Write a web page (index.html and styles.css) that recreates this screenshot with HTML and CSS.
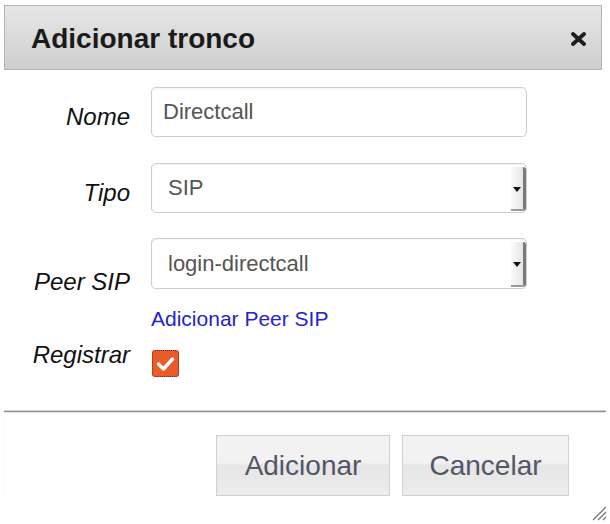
FILE: index.html
```html
<!DOCTYPE html>
<html>
<head>
	<title>Adicionar tronco</title>
	<link rel="stylesheet" href="styles.css">
</head>
<body>
	<div class="dialog">
		<div class="titlebar">
			<span class="title">Adicionar tronco</span>
			<button type="button" class="close" title="Fechar">
				<svg width="15" height="14" viewBox="0 0 15 14"><path d="M2 2 L13 12 M13 2 L2 12" stroke="#1e1e1e" stroke-width="3.8" stroke-linecap="round"/></svg>
			</button>
		</div>

		<form class="form">
			<div class="row">
				<label class="label">Nome</label>
				<input type="text" class="input" value="Directcall" />
			</div>
			<div class="row row-tipo">
				<label class="label">Tipo</label>
				<div class="select">
					<span class="value">SIP</span>
					<span class="arrow"></span>
				</div>
			</div>
			<div class="row row-peer">
				<label class="label label-peer">Peer SIP</label>
				<div class="field">
					<div class="select">
						<span class="value">login-directcall</span>
						<span class="arrow"></span>
					</div>
					<a href="#" class="link">Adicionar Peer SIP</a>
				</div>
			</div>
			<div class="row row-check">
				<label class="label label-check">Registrar</label>
				<span class="checkbox">
					<svg width="19" height="16" viewBox="0 0 19 16"><path d="M2.5 8 L7.5 13 L16.5 3" fill="none" stroke="#fff" stroke-width="3.4" stroke-linecap="round" stroke-linejoin="round"/></svg>
				</span>
			</div>
		</form>

		<div class="footer">
			<button type="button" class="btn btn-add">Adicionar</button>
			<button type="button" class="btn">Cancelar</button>
		</div>

		<svg class="grip" width="16" height="16" viewBox="0 0 16 16">
			<path d="M15 2 L2 15 M15 7 L7 15 M15 12 L12 15" stroke="#777" stroke-width="1.3"/>
		</svg>
	</div>
</body>
</html>
```

FILE: styles.css
```css
body {
	margin: 0;
	background: #fff;
	color: #111;
	font-family: "Liberation Sans", Arial, sans-serif;
}

.dialog {
	position: relative;
	height: 524px;
	box-sizing: border-box;
	padding: 5px 4px 0 4px;
}

.titlebar {
	display: flex;
	align-items: center;
	justify-content: space-between;
	height: 65px;
	box-sizing: border-box;
	margin-right: 4px;
	padding: 3px 15px 0 26px;
	border: 1px solid #b4b4b4;
	background: linear-gradient(#e6e6e6, #d8d8d8 60%, #cdcdcd);
}

.title {
	font-size: 28px;
	font-weight: bold;
	color: #1a1a1a;
}

.close {
	display: flex;
	padding: 0;
	border: 0;
	background: none;
}

.form {
	padding: 17px 0 34px 0;
}

.row {
	display: flex;
	align-items: flex-start;
	gap: 21px;
}

.row-tipo {
	margin-top: 26px;
}

.row-peer {
	margin-top: 25px;
}

.row-check {
	margin-top: 12px;
}

.label {
	width: 126px;
	text-align: right;
	font-size: 24px;
	font-style: italic;
	line-height: 24px;
	padding-top: 18px;
}

.label-peer {
	padding-top: 32px;
}

.label-check {
	padding-top: 0;
}

.input,
.select {
	width: 376px;
	height: 50px;
	box-sizing: border-box;
	border: 1px solid #cdcdcd;
	border-radius: 5px;
	box-shadow: inset 0 1px 2px rgba(0, 0, 0, 0.05);
	background: #fff;
	font-family: "Liberation Sans", Arial, sans-serif;
	font-size: 22px;
	color: #555;
}

.input {
	padding: 0 11px;
}

.select {
	display: flex;
	align-items: stretch;
	padding-left: 16px;
}

.select .value {
	flex: 1;
	align-self: center;
}

.arrow {
	position: relative;
	width: 12px;
	margin: 3px 0 1px 0;
	background: linear-gradient(to right, #fafafa, #e6e6e6);
	border-right: 3px solid #7a7a7a;
	border-bottom: 2px solid #9a9a9a;
	border-radius: 0 3px 3px 0;
}

.arrow::after {
	content: "";
	position: absolute;
	left: 2px;
	top: 20px;
	border-left: 4px solid transparent;
	border-right: 4px solid transparent;
	border-top: 5px solid #111;
}

.row-peer .select {
	height: 51px;
}

.link {
	display: block;
	margin-top: 18px;
	font-size: 21px;
	line-height: 24px;
	color: #2424cc;
	text-decoration: none;
}

.checkbox {
	display: flex;
	align-items: center;
	justify-content: center;
	width: 27px;
	height: 27px;
	box-sizing: border-box;
	margin: 7px 0 0 1px;
	border: 1px dotted #7a2410;
	border-radius: 3px;
	background: #e95b29;
}

.footer {
	display: flex;
	justify-content: flex-end;
	gap: 12px;
	padding: 23px 37px 0 0;
	border-top: 1px solid #8c8c8c;
	box-shadow: 0 -1px 0 #d6d6d6, inset 0 1px 1px #e2e2e2;
}

.btn {
	width: 167px;
	height: 61px;
	padding: 0;
	border: 1px solid #d0d0d0;
	background: linear-gradient(#f2f2f2, #f2f2f2 45%, #e6e6e6 50%, #ececec);
	font-family: "Liberation Sans", Arial, sans-serif;
	font-size: 28px;
	color: #525666;
}

.btn-add {
	width: 174px;
}

.grip {
	position: absolute;
	right: 3px;
	bottom: 3px;
}
```
